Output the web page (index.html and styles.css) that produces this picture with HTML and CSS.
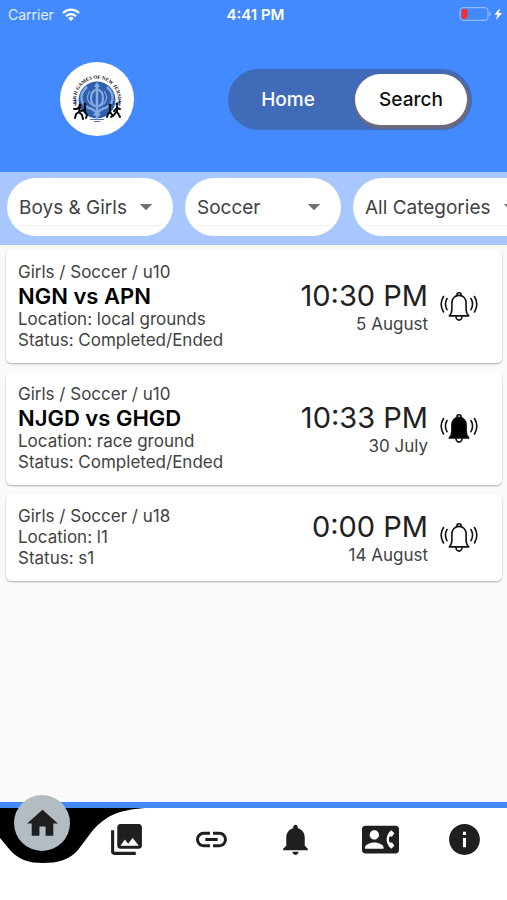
FILE: index.html
```html
<!DOCTYPE html>
<html lang="en">
<head>
    <meta charset="UTF-8">
    <title>Sikh Games of New Jersey</title>
    <meta name="viewport" content="width=device-width, initial-scale=1.0">
    <link rel="stylesheet" href="styles.css">
</head>
<body>
    <!-- shared icons -->
    <svg class="sprite" aria-hidden="true">
        <symbol id="arrow" viewBox="0 0 24 24">
            <path d="M7 10l5 5 5-5z"/>
        </symbol>
        <symbol id="ringing" viewBox="0 0 38 30">
            <g stroke="currentColor" stroke-width="1.6" stroke-linejoin="round" stroke-linecap="round">
                <path fill="none" d="M17 3V2.400a2 1.600 0 0 1 4 0V3"/>
                <path d="M9.300 23.900c2-1.800 2.600-3.500 2.600-6.800v-6.300c0-4.300 3-7.400 7.100-7.400s7.100 3.100 7.100 7.400v6.300c0 3.300.6 5 2.600 6.800z"/>
                <path fill="none" d="M16 24.500a3 3.600 0 0 0 6 0"/>
                <path fill="none" d="M7 6.500c-2 3.600-2 7.600 0 11.200M3.500 4.500c-3 5-3 10.500 0 15.500M31 6.500c2 3.600 2 7.600 0 11.200M34.500 4.500c3 5 3 10.500 0 15.500"/>
            </g>
        </symbol>
    </svg>

    <header class="header">
        <div class="status-bar">
            <div class="carrier">
                <span>Carrier</span>
                <svg class="wifi" viewBox="0 0 18 13" aria-hidden="true">
                    <g fill="none" stroke="#fff" stroke-width="2.2">
                        <path d="M1 5a11.4 11.4 0 0 1 16 0"/>
                        <path d="M4 8.2a7.2 7.2 0 0 1 10 0"/>
                    </g>
                    <path fill="#fff" d="M9 13L6.2 10.2a4 4 0 0 1 5.6 0z"/>
                </svg>
            </div>
            <span class="clock">4:41 PM</span>
            <div class="battery">
                <svg viewBox="0 0 44 14" aria-hidden="true">
                    <rect x="1" y=".7" width="28" height="12.6" rx="3" fill="none" stroke="#a3c5ff"/>
                    <rect x="2.5" y="2.3" width="6" height="9.4" rx="1" fill="#f0322f"/>
                    <path fill="#a3c5ff" d="M30.5 4.8c1.6.6 1.6 3.8 0 4.4z"/>
                    <path fill="#fff" d="M41 1l-5.600 6.800h3L37 13l6.200-7h-3.400z"/>
                </svg>
            </div>
        </div>

        <div class="top-row">
            <svg class="logo" viewBox="0 0 74 74" role="img" aria-label="Sikh Games of New Jersey">
                <circle cx="37" cy="37" r="37" fill="#fff"/>
                <circle cx="37" cy="38" r="18.5" fill="#2f5fae"/>
                <g fill="none" stroke="#86abe2">
                    <ellipse cx="37" cy="36" rx="6" ry="8.500" stroke-width="2.200"/>
                    <path stroke-width="2.600" d="M37 22v34"/>
                    <path stroke-width="2.400" d="M27 25c-9 8-7 19 5 22l8 6M47 25c9 8 7 19-5 22l-8 6"/>
                    <path stroke-width="1.200" d="M30 29c-5 7-2 12 4 15M44 29c5 7 2 12-4 15"/>
                </g>
                <path fill="#86abe2" d="M37 20l3 5h-6z"/>
                <path fill="none" stroke="#4a77bd" stroke-width="1.6" d="M15.500 37v7M59.500 37v7"/>
                <path fill="none" stroke="#4a77bd" stroke-width="1.200" d="M30 57.500h14M34 59.500h6"/>
                <g fill="none" stroke="#080b10" stroke-width="2" stroke-linecap="round" stroke-linejoin="round">
                    <path d="M20 45l-1 5-3 2-1 4M19 50l3 3 1 4M14 47l3 0 2-2M25 44l0 6 2 3-1 3M24 48l-3 1"/>
                    <path d="M57 44l0 6 2 3 1 2M56 50l-2 3-3 2M60 47l-3-1-3 3M50 45l0 5-2 2-1 3M50 50l3 4"/>
                </g>
                <g fill="#080b10">
                    <circle cx="20" cy="43" r="1.500"/>
                    <circle cx="25" cy="42" r="1.500"/>
                    <circle cx="57" cy="42" r="1.500"/>
                    <circle cx="50" cy="43" r="1.500"/>
                </g>
                <path id="arc" fill="none" d="M16.500 41a20.800 20.800 0 1 1 41 0"/>
                <text class="logo-text"><textPath href="#arc" startOffset="50%" text-anchor="middle">SIKH GAMES OF NEW JERSEY</textPath></text>
            </svg>

            <div class="toggle">
                <button type="button" class="toggle-btn">Home</button>
                <button type="button" class="toggle-btn active">Search</button>
            </div>
        </div>
    </header>

    <div class="filters">
        <label class="filter">
            <select aria-label="Gender">
                <option>Boys &amp; Girls</option>
                <option>Boys</option>
                <option>Girls</option>
            </select>
            <svg class="arrow"><use href="#arrow"/></svg>
        </label>
        <label class="filter sport">
            <select aria-label="Sport">
                <option>Soccer</option>
            </select>
            <svg class="arrow"><use href="#arrow"/></svg>
        </label>
        <label class="filter">
            <select aria-label="Category">
                <option>All Categories</option>
                <option>u10</option>
                <option>u18</option>
            </select>
            <svg class="arrow"><use href="#arrow"/></svg>
        </label>
    </div>

    <main class="games">
        <article class="card">
            <div class="info">
                <p>Girls / Soccer / u10</p>
                <h2>NGN vs APN</h2>
                <p>Location: local grounds</p>
                <p>Status: Completed/Ended</p>
            </div>
            <div class="when">
                <p class="time">10:30 PM</p>
                <p>5 August</p>
            </div>
            <button type="button" class="remind" aria-label="Remind me"><svg><use href="#ringing"/></svg></button>
        </article>

        <article class="card">
            <div class="info">
                <p>Girls / Soccer / u10</p>
                <h2>NJGD vs GHGD</h2>
                <p>Location: race ground</p>
                <p>Status: Completed/Ended</p>
            </div>
            <div class="when">
                <p class="time">10:33 PM</p>
                <p>30 July</p>
            </div>
            <button type="button" class="remind on" aria-label="Remind me"><svg><use href="#ringing"/></svg></button>
        </article>

        <article class="card">
            <div class="info">
                <p>Girls / Soccer / u18</p>
                <p>Location: l1</p>
                <p>Status: s1</p>
            </div>
            <div class="when">
                <p class="time">0:00 PM</p>
                <p>14 August</p>
            </div>
            <button type="button" class="remind" aria-label="Remind me"><svg><use href="#ringing"/></svg></button>
        </article>
    </main>

    <nav class="tabs">
        <!-- dip under the selected tab -->
        <svg class="dip" viewBox="0 0 145 56" aria-hidden="true">
            <path d="M0 0H145C118 2 104 8 90 26L78 42C69 52 58 55 43 55C29 55 19 52 10 42L0 30Z"/>
        </svg>
        <a href="#" class="tab selected" aria-label="Home">
            <span class="bubble"><svg viewBox="0 0 24 24"><path d="M10 20v-6h4v6h5v-8h3L12 3 2 12h3v8z"/></svg></span>
        </a>
        <a href="#" class="tab" aria-label="Photos">
            <svg viewBox="0 0 24 24"><path d="M22 16V4c0-1.100-.9-2-2-2H8c-1.100 0-2 .9-2 2v12c0 1.100.9 2 2 2h12c1.100 0 2-.9 2-2zm-11-4l2.030 2.710L16 11l4 5H8l3-4zM2 6v14c0 1.100.9 2 2 2h14v-2H4V6H2z"/></svg>
        </a>
        <a href="#" class="tab" aria-label="Links">
            <svg viewBox="0 0 24 24"><path d="M3.900 12c0-1.710 1.390-3.100 3.100-3.100h4V7H7c-2.760 0-5 2.240-5 5s2.240 5 5 5h4v-1.900H7c-1.710 0-3.100-1.390-3.100-3.100zM8 13h8v-2H8v2zm9-6h-4v1.900h4c1.710 0 3.100 1.390 3.100 3.100s-1.390 3.100-3.100 3.100h-4V17h4c2.760 0 5-2.240 5-5s-2.240-5-5-5z"/></svg>
        </a>
        <a href="#" class="tab" aria-label="Notifications">
            <svg viewBox="0 0 24 24"><path d="M12 22c1.100 0 2-.9 2-2h-4c0 1.100.89 2 2 2zm6-6v-5c0-3.070-1.640-5.640-4.500-6.320V4c0-.83-.67-1.500-1.500-1.500s-1.500.67-1.500 1.500v.68C7.630 5.360 6 7.920 6 11v5l-2 2v1h16v-1l-2-2z"/></svg>
        </a>
        <a href="#" class="tab" aria-label="Contacts">
            <svg viewBox="0 0 24 24"><path d="M22 3H2C.9 3 0 3.900 0 5v14c0 1.100.9 2 2 2h20c1.100 0 1.990-.9 1.990-2L24 5c0-1.100-.9-2-2-2zM8 6c1.660 0 3 1.340 3 3s-1.340 3-3 3-3-1.340-3-3 1.340-3 3-3zm6 12H2v-1c0-2 4-3.100 6-3.100s6 1.100 6 3.100v1zm3.850-4h1.640L21 16l-1.990 1.990c-1.310-.98-2.280-2.380-2.730-3.990-.18-.64-.28-1.310-.28-2s.1-1.360.28-2c.45-1.620 1.420-3.010 2.730-3.990L21 8l-1.510 2h-1.640c-.22.63-.35 1.300-.35 2s.13 1.370.35 2z"/></svg>
        </a>
        <a href="#" class="tab" aria-label="About">
            <svg viewBox="0 0 24 24"><path d="M12 2C6.480 2 2 6.480 2 12s4.480 10 10 10 10-4.480 10-10S17.520 2 12 2zm1 15h-2v-6h2v6zm0-8h-2V7h2v2z"/></svg>
        </a>
    </nav>
</body>
</html>
```

FILE: styles.css
```css
:root {
    --blue: #448aff;
    --blue-light: #a9c7ff;
    --text: #424242;
    --icon: #1f1f1f;
}

* {
    box-sizing: border-box;
}

body {
    background: #fafafa;
    color: var(--text);
    font-family: Inter, 'Liberation Sans', sans-serif;
    font-size: 17px;
    line-height: 21px;
    margin: 0;
    min-height: 100vh;
    display: flex;
    flex-direction: column;
    overflow-x: hidden;
}

h2,
p {
    margin: 0;
}

button,
select {
    font-family: inherit;
    border: none;
    padding: 0;
    cursor: pointer;
}

.sprite {
    position: absolute;
    width: 0;
    height: 0;
}

/* Header */
.header {
    background: var(--blue);
    padding-bottom: 36px;
}

.status-bar {
    display: grid;
    grid-template-columns: 1fr auto 1fr;
    align-items: center;
    height: 28px;
    padding: 0 4px 0 8px;
    color: #fff;
    font-size: 14px;
}

.carrier {
    display: flex;
    align-items: center;
    gap: 8px;
    color: #e3edff;
}

.wifi {
    width: 18px;
    height: 13px;
}

.clock {
    font-size: 15px;
    font-weight: 600;
}

.battery {
    display: flex;
    justify-content: flex-end;
}

.battery svg {
    width: 44px;
    height: 14px;
}

.top-row {
    display: flex;
    justify-content: space-between;
    align-items: center;
    padding: 34px 35px 0 60px;
}

.logo {
    width: 74px;
    height: 74px;
}

.logo-text {
    font-family: 'Liberation Serif', serif;
    font-size: 5px;
    font-weight: bold;
    fill: #080b10;
}

.toggle {
    display: flex;
    padding: 5px;
    height: 61px;
    border-radius: 31px;
    background: #3f6bb9;
}

.toggle-btn {
    width: 112px;
    border-radius: 26px;
    background: transparent;
    color: #fff;
    font-size: 19px;
    font-weight: 500;
}

.toggle-btn:first-child {
    width: 122px;
    padding-right: 12px;
}

.toggle-btn.active {
    background: #fff;
    color: #111;
    box-shadow: 1px 2px 2px 2px #6d6a7c;
}

/* Filters */
.filters {
    display: flex;
    gap: 12px;
    padding: 6px 7px 9px;
    background: var(--blue-light);
    overflow: hidden;
}

.filter {
    display: flex;
    align-items: center;
    flex: none;
    height: 58px;
    padding: 0 12px;
    border-radius: 29px;
    background: #fff;
}

.filter select {
    flex: 1;
    height: 38px;
    padding: 2px 4px 0 0;
    appearance: none;
    background: transparent;
    border-bottom: 1px solid #eee;
    color: var(--text);
    font-size: 19px;
}

.filter.sport {
    width: 156px;
}

.arrow {
    width: 30px;
    height: 38px;
    border-bottom: 1px solid #eee;
    fill: #707070;
    pointer-events: none;
}

/* Game list */
.games {
    flex: 1;
    display: flex;
    flex-direction: column;
    gap: 9px;
    padding: 5px 5px 20px 6px;
}

.card {
    display: flex;
    align-items: center;
    padding: 12px 24px 12px 12px;
    border-radius: 5px;
    background: #fff;
    box-shadow: 0 1px 2px rgba(0, 0, 0, 0.3);
}

.info {
    flex: 1;
}

.info h2 {
    color: #000;
    font-size: 22px;
    line-height: 26px;
    font-weight: 600;
}

.when {
    text-align: right;
}

.time {
    color: #212121;
    font-size: 29px;
    line-height: 36px;
}

.remind {
    display: flex;
    margin-left: 12px;
    background: none;
    color: #111;
}

.remind svg {
    width: 38px;
    height: 30px;
    fill: none;
}

.remind.on svg {
    fill: #000;
}

/* Bottom tabs */
.tabs {
    position: relative;
    display: grid;
    grid-template-columns: repeat(6, 1fr);
    padding-bottom: 30px;
    border-top: 6px solid var(--blue);
    background: #fff;
}

.dip {
    position: absolute;
    top: 0;
    left: 0;
    width: 145px;
    height: 56px;
}

.tab {
    display: flex;
    align-items: center;
    justify-content: center;
    height: 62px;
}

.tab svg {
    width: 37px;
    height: 37px;
    fill: var(--icon);
}

.tab.selected {
    position: relative;
}

/* the bubble sits over the bar's top edge */
.bubble {
    position: absolute;
    top: -13px;
    display: flex;
    align-items: center;
    justify-content: center;
    width: 56px;
    height: 56px;
    border-radius: 50%;
    background: #b4bcc3;
}
```
